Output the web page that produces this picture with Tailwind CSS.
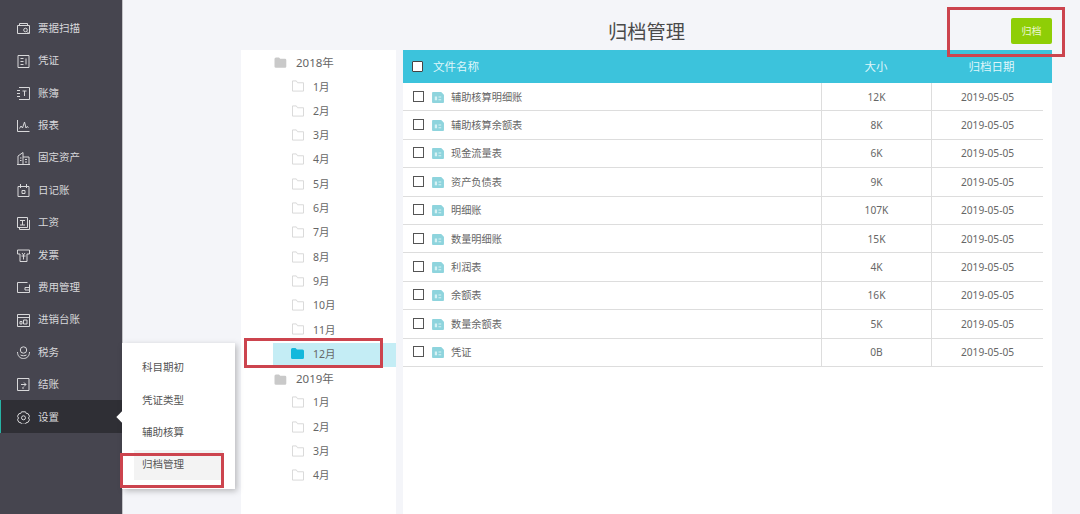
<!DOCTYPE html>
<html lang="zh-CN">
<head>
  <meta charset="UTF-8">
  <title>归档管理</title>
  <script src="https://cdn.jsdelivr.net/npm/@tailwindcss/browser@4"></script>
</head>
<body class="bg-[#f4f5f9] font-['Noto_Sans','Noto_Sans_CJK_SC',sans-serif] text-[#555]">
  <svg class="hidden">
    <symbol id="folder" viewBox="0 0 13 12"><path d="M.5 11.5V.5h4.2l1.3 2h6.5v9z" fill="none" stroke="#d6d6d6"/></symbol>
    <symbol id="year" viewBox="0 0 13 11"><path d="M.5 2Q.5.5 2 .5h3l1.2 1.2H11q1.300 0 1.300 1.300v6.500q0 1.200-1.300 1.200H2Q.5 10.7 .5 9.500z" fill="#c9c9c9"/></symbol>
    <symbol id="file" viewBox="0 0 13 12"><path d="M0 1Q0 0 1 0h9l3 3v8q0 1-1 1H1q-1 0-1-1z" fill="#8ed4dd"/><path d="M7 5h3v1H7zM7 8h3v1H7zM3 5h2.500v4H3z" fill="#d6f1f4"/></symbol>
  </svg>

  <div class="relative flex h-[514px] w-[1080px] overflow-hidden">
    <!-- sidebar -->
    <aside class="w-[123px] shrink-0 border-r border-[#c4c4c8] bg-[#46454f] pt-[11.5px] text-[10.5px] text-[#d8d8db] [&>div]:pt-[2px]">
      <div class="flex h-[32.4px] items-center gap-[8px] pl-[17px]">
        <svg class="size-[13px]" viewBox="0 0 13 13" fill="none" stroke="#d8d8da"><path d="M.5 3.500h12v8H.5zM2.500 3.500v-2h8v2"/><circle cx="8.500" cy="8" r="1.800"/><path d="M10 9.500l1.500 1.500"/></svg>
        <span>票据扫描</span>
      </div>
      <div class="flex h-[32.4px] items-center gap-[8px] pl-[17px]">
        <svg class="size-[13px]" viewBox="0 0 13 13" fill="none" stroke="#d8d8da"><path d="M1 .5h11v12H1zM3.500 3.500h3M3.500 6.500h3M3.500 9.500h3M9 3.500v6"/></svg>
        <span>凭证</span>
      </div>
      <div class="flex h-[32.4px] items-center gap-[8px] pl-[17px]">
        <svg class="size-[13px]" viewBox="0 0 13 13" fill="none" stroke="#d8d8da"><path d="M2 .5h10.500v12H2M0 3.500h3M0 6.500h3M0 9.500h3M5.500 4h4M7.500 4v5"/></svg>
        <span>账簿</span>
      </div>
      <div class="flex h-[32.4px] items-center gap-[8px] pl-[17px]">
        <svg class="size-[13px]" viewBox="0 0 13 13" fill="none" stroke="#d8d8da"><path d="M.5 1v11.500h12M2.500 9.500l1.500-2.500 1.500 2L7.500 3l1.500 6 1-1.500 1.500 1"/></svg>
        <span>报表</span>
      </div>
      <div class="flex h-[32.4px] items-center gap-[8px] pl-[17px]">
        <svg class="size-[13px]" viewBox="0 0 13 13" fill="none" stroke="#d8d8da"><path d="M1 12.500V4l5-3.500V12.500zM6 5h6v7.500H6M3 6h1.500M3 8.500h1.500M8 7.500h2M8 10h2M0 12.500h13"/></svg>
        <span>固定资产</span>
      </div>
      <div class="flex h-[32.4px] items-center gap-[8px] pl-[17px]">
        <svg class="size-[13px]" viewBox="0 0 13 13" fill="none" stroke="#d8d8da"><path d="M1 2.500h11v10H1zM3.500 0v4M9.500 0v4M5 6.500h3v3H5z"/></svg>
        <span>日记账</span>
      </div>
      <div class="flex h-[32.4px] items-center gap-[8px] pl-[17px]">
        <svg class="size-[13px]" viewBox="0 0 13 13" fill="none" stroke="#d8d8da"><path d="M.5.500h10v10H.5zM3 3.500h5M5.500 3.500v4.500M3 8h5M2.500 10.500v2h10V3"/></svg>
        <span>工资</span>
      </div>
      <div class="flex h-[32.4px] items-center gap-[8px] pl-[17px]">
        <svg class="size-[13px]" viewBox="0 0 13 13" fill="none" stroke="#d8d8da"><path d="M.5 1h12v4h-2.500v7.500H3V5H.5zM5 4l1.500 2L8 4M4.500 7h4M6.500 6v4.500"/></svg>
        <span>发票</span>
      </div>
      <div class="flex h-[32.4px] items-center gap-[8px] pl-[17px]">
        <svg class="size-[13px]" viewBox="0 0 13 13" fill="none" stroke="#d8d8da"><path d="M12.500 3.500v8H.5v-10h10M8 6.500h4.500v2.500H8z"/></svg>
        <span>费用管理</span>
      </div>
      <div class="flex h-[32.4px] items-center gap-[8px] pl-[17px]">
        <svg class="size-[13px]" viewBox="0 0 13 13" fill="none" stroke="#d8d8da"><path d="M.5.500h12v12H.5zM.5 3.500h12M3 10V7.500h2V10zM6.500 10V6h3.500v4z"/></svg>
        <span>进销台账</span>
      </div>
      <div class="flex h-[32.4px] items-center gap-[8px] pl-[17px]">
        <svg class="size-[13px]" viewBox="0 0 13 13" fill="none" stroke="#d8d8da"><circle cx="6.500" cy="4" r="3.200"/><path d="M.5 6c0 4 2.500 6.500 6 6.500s6-2.500 6-6.500M3.500 9c2 1 4 1 6 0"/></svg>
        <span>税务</span>
      </div>
      <div class="flex h-[32.4px] items-center gap-[8px] pl-[17px]">
        <svg class="size-[13px]" viewBox="0 0 13 13" fill="none" stroke="#d8d8da"><path d="M.5.500h11.500v12H.5zM4 6.500h5M7 4.500l2 2-2 2M5 10h2"/></svg>
        <span>结账</span>
      </div>
      <div class="flex h-[32.4px] items-center gap-[8px] border-l border-[#27b3a5] bg-[#2f2f35] pl-[16px]">
        <svg class="size-[13px]" viewBox="0 0 13 13" fill="none" stroke="#d8d8da"><path d="M4.500.8h4l.8 1.700 1.800.2 1.400 2.500-1 1.800 1 1.800-1.400 2.500-1.800.2-.8 1.700h-4l-.8-1.700-1.800-.2L.5 8.800l1-1.800-1-1.800 1.400-2.500 1.800-.2z"/><circle cx="6.500" cy="6.800" r="2"/></svg>
        <span>设置</span>
      </div>
    </aside>

    <!-- content -->
    <main class="min-w-0 flex-1 pr-[28px] pl-[118px]">
      <header class="grid h-[50px] grid-cols-[1fr_auto_1fr] items-start">
        <div></div>
        <h1 class="pt-[17px] text-[19.25px] leading-[30px] text-[#4a4a4a]">归档管理</h1>
        <button class="mt-[18px] h-[26px] w-[41px] justify-self-end rounded-[2px] bg-[#8fce06] text-[10px] text-[#eef8d6]">归档</button>
      </header>

      <div class="flex h-[464px] gap-[7px]">
        <!-- tree -->
        <nav class="w-[155px] bg-white text-[10.5px] text-[#666]">
          <div class="mb-[1px] flex h-[24.3px] items-center pl-[33px]"><svg class="mr-[9px] h-[11px] w-[13px]"><use href="#year"/></svg><span class="text-[11.5px]">2018年</span></div>
          <div class="flex h-[24.3px] items-center pl-[51px]"><svg class="mr-[9px] -mt-[2px] h-[12px] w-[12px]"><use href="#folder"/></svg>1月</div>
          <div class="flex h-[24.3px] items-center pl-[51px]"><svg class="mr-[9px] -mt-[2px] h-[12px] w-[12px]"><use href="#folder"/></svg>2月</div>
          <div class="flex h-[24.3px] items-center pl-[51px]"><svg class="mr-[9px] -mt-[2px] h-[12px] w-[12px]"><use href="#folder"/></svg>3月</div>
          <div class="flex h-[24.3px] items-center pl-[51px]"><svg class="mr-[9px] -mt-[2px] h-[12px] w-[12px]"><use href="#folder"/></svg>4月</div>
          <div class="flex h-[24.3px] items-center pl-[51px]"><svg class="mr-[9px] -mt-[2px] h-[12px] w-[12px]"><use href="#folder"/></svg>5月</div>
          <div class="flex h-[24.3px] items-center pl-[51px]"><svg class="mr-[9px] -mt-[2px] h-[12px] w-[12px]"><use href="#folder"/></svg>6月</div>
          <div class="flex h-[24.3px] items-center pl-[51px]"><svg class="mr-[9px] -mt-[2px] h-[12px] w-[12px]"><use href="#folder"/></svg>7月</div>
          <div class="flex h-[24.3px] items-center pl-[51px]"><svg class="mr-[9px] -mt-[2px] h-[12px] w-[12px]"><use href="#folder"/></svg>8月</div>
          <div class="flex h-[24.3px] items-center pl-[51px]"><svg class="mr-[9px] -mt-[2px] h-[12px] w-[12px]"><use href="#folder"/></svg>9月</div>
          <div class="flex h-[24.3px] items-center pl-[51px]"><svg class="mr-[9px] -mt-[2px] h-[12px] w-[12px]"><use href="#folder"/></svg>10月</div>
          <div class="flex h-[24.3px] items-center pl-[51px]"><svg class="mr-[9px] -mt-[2px] h-[12px] w-[12px]"><use href="#folder"/></svg>11月</div>
          <div class="ml-[32px] flex h-[24.3px] items-center bg-[#c4edf5] pl-[18px]"><svg class="mr-[9px] -mt-[2px] h-[11px] w-[13px]" viewBox="0 0 13 11"><path d="M0 1.500Q0 0 1.500 0h3l1.500 1.500h5.500Q13 1.500 13 3v6.500Q13 11 11.500 11h-10Q0 11 0 9.500z" fill="#14b8dc"/></svg>12月</div>
          <div class="flex h-[24.3px] items-center pl-[33px]"><svg class="mr-[9px] h-[11px] w-[13px]"><use href="#year"/></svg><span class="text-[11.5px]">2019年</span></div>
          <div class="flex h-[24.3px] items-center pl-[51px]"><svg class="mr-[9px] -mt-[2px] h-[12px] w-[12px]"><use href="#folder"/></svg>1月</div>
          <div class="flex h-[24.3px] items-center pl-[51px]"><svg class="mr-[9px] -mt-[2px] h-[12px] w-[12px]"><use href="#folder"/></svg>2月</div>
          <div class="flex h-[24.3px] items-center pl-[51px]"><svg class="mr-[9px] -mt-[2px] h-[12px] w-[12px]"><use href="#folder"/></svg>3月</div>
          <div class="flex h-[24.3px] items-center pl-[51px]"><svg class="mr-[9px] -mt-[2px] h-[12px] w-[12px]"><use href="#folder"/></svg>4月</div>
        </nav>

        <!-- file table -->
        <section class="w-[649px] bg-white text-[10.2px] text-[#666]">
          <div class="grid h-[33px] grid-cols-[418px_110px_121px] items-center bg-[#3cc3dc] text-[11.5px] text-[#dff6fa]">
            <div class="flex items-center pl-[9px]"><span class="mr-[10px] size-[11px] rounded-[1px] border border-[#444] bg-white"></span>文件名称</div>
            <div class="text-center">大小</div>
            <div class="text-center">归档日期</div>
          </div>
          <div class="w-[640px]">
            <div class="grid h-[28.4px] grid-cols-[418px_110px_112px] items-center border-b border-[#ddd] [&>div]:pt-[1px]">
              <div class="flex items-center pl-[10px]"><span class="mr-[8px] -mt-[2px] size-[11px] border border-[#555]"></span><svg class="mr-[7px] h-[11px] w-[12px]"><use href="#file"/></svg>辅助核算明细账</div>
              <div class="flex h-full items-center justify-center border-l border-[#ddd]">12K</div>
              <div class="flex h-full items-center justify-center border-l border-[#ddd]">2019-05-05</div>
            </div>
            <div class="grid h-[28.4px] grid-cols-[418px_110px_112px] items-center border-b border-[#ddd] [&>div]:pt-[1px]">
              <div class="flex items-center pl-[10px]"><span class="mr-[8px] -mt-[2px] size-[11px] border border-[#555]"></span><svg class="mr-[7px] h-[11px] w-[12px]"><use href="#file"/></svg>辅助核算余额表</div>
              <div class="flex h-full items-center justify-center border-l border-[#ddd]">8K</div>
              <div class="flex h-full items-center justify-center border-l border-[#ddd]">2019-05-05</div>
            </div>
            <div class="grid h-[28.4px] grid-cols-[418px_110px_112px] items-center border-b border-[#ddd] [&>div]:pt-[1px]">
              <div class="flex items-center pl-[10px]"><span class="mr-[8px] -mt-[2px] size-[11px] border border-[#555]"></span><svg class="mr-[7px] h-[11px] w-[12px]"><use href="#file"/></svg>现金流量表</div>
              <div class="flex h-full items-center justify-center border-l border-[#ddd]">6K</div>
              <div class="flex h-full items-center justify-center border-l border-[#ddd]">2019-05-05</div>
            </div>
            <div class="grid h-[28.4px] grid-cols-[418px_110px_112px] items-center border-b border-[#ddd] [&>div]:pt-[1px]">
              <div class="flex items-center pl-[10px]"><span class="mr-[8px] -mt-[2px] size-[11px] border border-[#555]"></span><svg class="mr-[7px] h-[11px] w-[12px]"><use href="#file"/></svg>资产负债表</div>
              <div class="flex h-full items-center justify-center border-l border-[#ddd]">9K</div>
              <div class="flex h-full items-center justify-center border-l border-[#ddd]">2019-05-05</div>
            </div>
            <div class="grid h-[28.4px] grid-cols-[418px_110px_112px] items-center border-b border-[#ddd] [&>div]:pt-[1px]">
              <div class="flex items-center pl-[10px]"><span class="mr-[8px] -mt-[2px] size-[11px] border border-[#555]"></span><svg class="mr-[7px] h-[11px] w-[12px]"><use href="#file"/></svg>明细账</div>
              <div class="flex h-full items-center justify-center border-l border-[#ddd]">107K</div>
              <div class="flex h-full items-center justify-center border-l border-[#ddd]">2019-05-05</div>
            </div>
            <div class="grid h-[28.4px] grid-cols-[418px_110px_112px] items-center border-b border-[#ddd] [&>div]:pt-[1px]">
              <div class="flex items-center pl-[10px]"><span class="mr-[8px] -mt-[2px] size-[11px] border border-[#555]"></span><svg class="mr-[7px] h-[11px] w-[12px]"><use href="#file"/></svg>数量明细账</div>
              <div class="flex h-full items-center justify-center border-l border-[#ddd]">15K</div>
              <div class="flex h-full items-center justify-center border-l border-[#ddd]">2019-05-05</div>
            </div>
            <div class="grid h-[28.4px] grid-cols-[418px_110px_112px] items-center border-b border-[#ddd] [&>div]:pt-[1px]">
              <div class="flex items-center pl-[10px]"><span class="mr-[8px] -mt-[2px] size-[11px] border border-[#555]"></span><svg class="mr-[7px] h-[11px] w-[12px]"><use href="#file"/></svg>利润表</div>
              <div class="flex h-full items-center justify-center border-l border-[#ddd]">4K</div>
              <div class="flex h-full items-center justify-center border-l border-[#ddd]">2019-05-05</div>
            </div>
            <div class="grid h-[28.4px] grid-cols-[418px_110px_112px] items-center border-b border-[#ddd] [&>div]:pt-[1px]">
              <div class="flex items-center pl-[10px]"><span class="mr-[8px] -mt-[2px] size-[11px] border border-[#555]"></span><svg class="mr-[7px] h-[11px] w-[12px]"><use href="#file"/></svg>余额表</div>
              <div class="flex h-full items-center justify-center border-l border-[#ddd]">16K</div>
              <div class="flex h-full items-center justify-center border-l border-[#ddd]">2019-05-05</div>
            </div>
            <div class="grid h-[28.4px] grid-cols-[418px_110px_112px] items-center border-b border-[#ddd] [&>div]:pt-[1px]">
              <div class="flex items-center pl-[10px]"><span class="mr-[8px] -mt-[2px] size-[11px] border border-[#555]"></span><svg class="mr-[7px] h-[11px] w-[12px]"><use href="#file"/></svg>数量余额表</div>
              <div class="flex h-full items-center justify-center border-l border-[#ddd]">5K</div>
              <div class="flex h-full items-center justify-center border-l border-[#ddd]">2019-05-05</div>
            </div>
            <div class="grid h-[28.4px] grid-cols-[418px_110px_112px] items-center border-b border-[#ddd] [&>div]:pt-[1px]">
              <div class="flex items-center pl-[10px]"><span class="mr-[8px] -mt-[2px] size-[11px] border border-[#555]"></span><svg class="mr-[7px] h-[11px] w-[12px]"><use href="#file"/></svg>凭证</div>
              <div class="flex h-full items-center justify-center border-l border-[#ddd]">0B</div>
              <div class="flex h-full items-center justify-center border-l border-[#ddd]">2019-05-05</div>
            </div>
          </div>
        </section>
      </div>
    </main>

    <!-- settings flyout -->
    <div class="absolute top-[343px] left-[122px] h-[146px] w-[113px] bg-white pt-[9px] text-[10.5px] text-[#555] shadow-[2px_2px_6px_rgba(0,0,0,0.25)]">
      <span class="absolute top-[70px] -left-[4px] size-[8px] rotate-45 bg-white"></span>
      <div class="flex h-[32.4px] items-center pl-[20px]">科目期初</div>
      <div class="flex h-[32.4px] items-center pl-[20px]">凭证类型</div>
      <div class="flex h-[32.4px] items-center pl-[20px]">辅助核算</div>
      <div class="mt-[1px] ml-[12px] flex h-[30px] w-[89px] items-center bg-[#f3f3f3] pl-[8px]">归档管理</div>
    </div>

    <!-- red callouts -->
    <div class="pointer-events-none absolute top-[7px] left-[947px] h-[50px] w-[118px] border-[3px] border-[#cc444e]"></div>
    <div class="pointer-events-none absolute top-[338px] left-[244px] h-[30px] w-[139px] border-[3px] border-[#cc444e]"></div>
    <div class="pointer-events-none absolute top-[453px] left-[120px] h-[35px] w-[104px] border-[3px] border-[#cc444e]"></div>
  </div>
</body>
</html>
